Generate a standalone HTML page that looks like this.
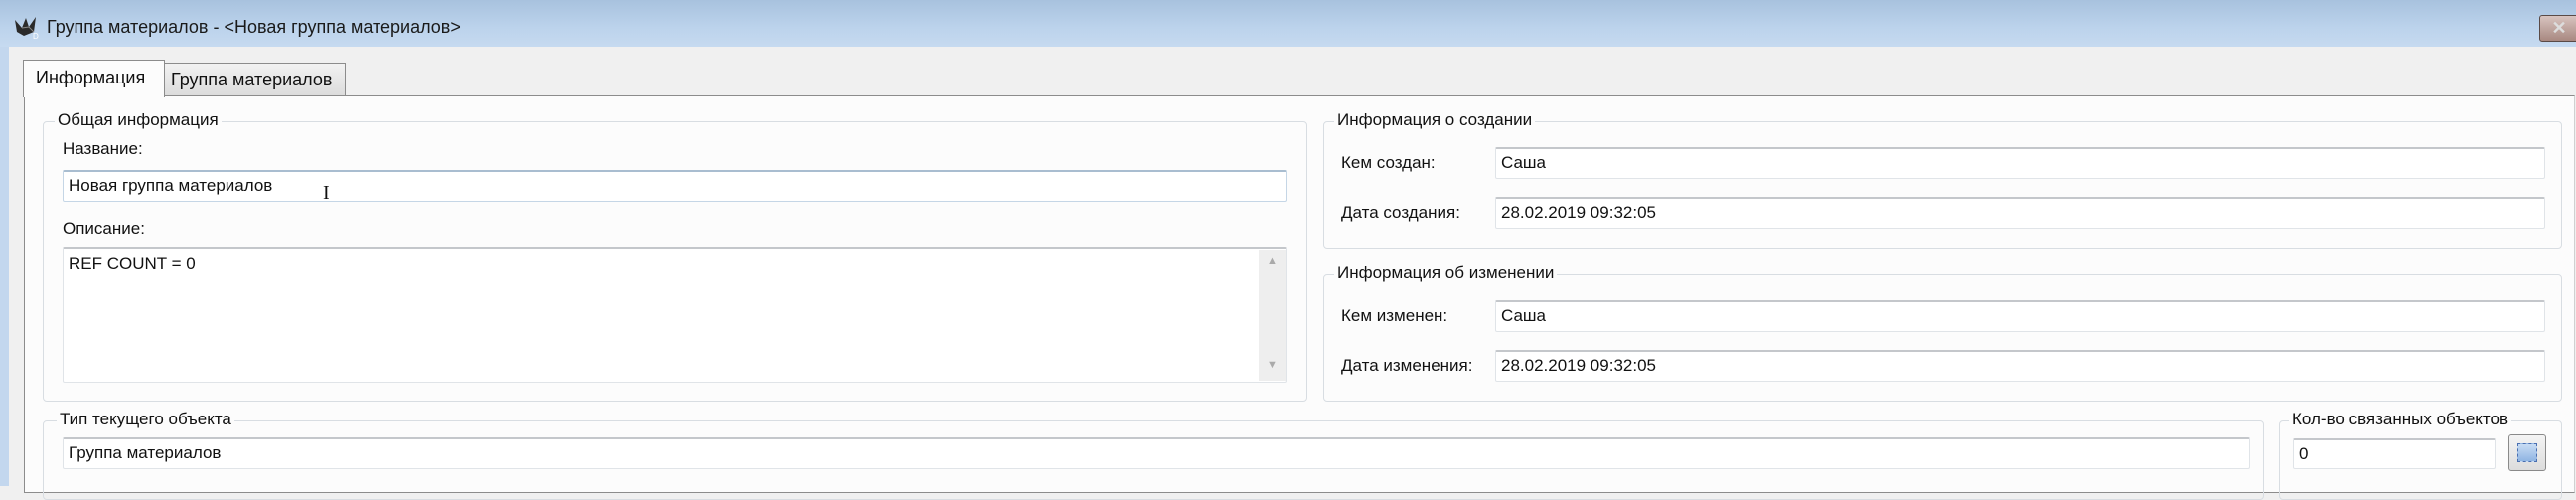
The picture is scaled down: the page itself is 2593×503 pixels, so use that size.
<!DOCTYPE html>
<html><head><meta charset="utf-8"><style>
*{margin:0;padding:0;box-sizing:border-box}
body{width:2593px;height:489px;overflow:hidden;background:#f0f0f0;font-family:"Liberation Sans",sans-serif;font-size:17px;color:#111;position:relative}
.a{position:absolute}
.title{left:0;top:0;width:2593px;height:47px;background:linear-gradient(#a8c2de,#bcd3ec 60%,#c6daf0)}
.frame{left:0;top:47px;width:9px;height:442px;background:#c3d7ee}
.inner{left:9px;top:47px;width:2584px;height:442px;background:#f0f0f0}
.panel{left:24px;top:96px;width:2568px;height:400px;background:#fcfcfc;border:1px solid #8c8c8c;border-right:1px solid #d0d0d0}
.grp{border:1px solid #d8dde2;border-radius:4px}
.gl{background:#fcfcfc;padding:0 3px;line-height:18px}
.inp{background:#fff;border:1px solid #e0e4e8;border-top:2px solid #c4c7cb;border-radius:2px;padding-left:5px;line-height:28px}
.lab{line-height:18px}
</style></head><body>
<div class="a title"></div>
<svg class="a" style="left:14px;top:14px" width="26" height="26" viewBox="0 0 26 26"><path d="M1 6 L8 14 L12 4 L15 13 L22 3 L20 18 L10 22 L3 18 Z" fill="#2a2a2a"/><path d="M8 14 L15 13 L20 18" stroke="#888" fill="none"/><text x="19" y="25" font-size="8" fill="#fff" font-family="Liberation Sans">D</text></svg>
<div class="a" style="left:47px;top:17px;font-size:18px;color:#1a1a1a">Группа материалов - &lt;Новая группа материалов&gt;</div>
<div class="a" style="left:2556px;top:15px;width:40px;height:27px;border:1px solid #5a4a46;border-radius:3px;background:linear-gradient(#d8c4c0,#a88880);color:#ddd;font-weight:bold;font-size:18px;text-align:center;line-height:24px">✕</div>
<div class="a frame"></div>
<div class="a inner"></div>
<div class="a panel"></div>
<div class="a" style="left:165px;top:63px;width:183px;height:33px;border:1px solid #8c8c8c;border-bottom:none;background:linear-gradient(#f2f2f2,#dcdcdc);font-size:18px;padding:6px 0 0 6px">Группа материалов</div>
<div class="a" style="left:23px;top:60px;width:143px;height:38px;border:1px solid #8c8c8c;border-bottom:none;background:#fcfcfc;font-size:18px;padding:7px 0 0 12px">Информация</div>

<div class="a grp" style="left:43px;top:122px;width:1273px;height:282px"></div>
<div class="a gl" style="left:55px;top:112px">Общая информация</div>
<div class="a lab" style="left:63px;top:141px">Название:</div>
<div class="a inp" style="left:63px;top:171px;width:1232px;height:32px;border-color:#c5d6e6;border-top-color:#a9bdd0">Новая группа материалов</div>
<div class="a" style="left:325px;top:184px;font-size:20px;font-family:'Liberation Serif',serif;line-height:20px">I</div>
<div class="a lab" style="left:63px;top:221px">Описание:</div>
<div class="a inp" style="left:63px;top:248px;width:1232px;height:137px;line-height:24px;padding-top:4px">REF COUNT = 0</div>
<div class="a" style="left:1267px;top:251px;width:27px;height:132px;background:#eeeeee;color:#aaa;font-size:11px;text-align:center"><div style="margin-top:6px">▲</div><div style="margin-top:92px">▼</div></div>

<div class="a grp" style="left:1332px;top:122px;width:1247px;height:128px"></div>
<div class="a gl" style="left:1343px;top:112px">Информация о создании</div>
<div class="a lab" style="left:1350px;top:155px">Кем создан:</div>
<div class="a inp" style="left:1505px;top:148px;width:1057px;height:32px">Саша</div>
<div class="a lab" style="left:1350px;top:205px">Дата создания:</div>
<div class="a inp" style="left:1505px;top:198px;width:1057px;height:32px">28.02.2019 09:32:05</div>

<div class="a grp" style="left:1332px;top:276px;width:1247px;height:128px"></div>
<div class="a gl" style="left:1343px;top:266px">Информация об изменении</div>
<div class="a lab" style="left:1350px;top:309px">Кем изменен:</div>
<div class="a inp" style="left:1505px;top:302px;width:1057px;height:32px">Саша</div>
<div class="a lab" style="left:1350px;top:359px">Дата изменения:</div>
<div class="a inp" style="left:1505px;top:352px;width:1057px;height:32px">28.02.2019 09:32:05</div>

<div class="a grp" style="left:43px;top:423px;width:2236px;height:80px"></div>
<div class="a gl" style="left:57px;top:413px">Тип текущего объекта</div>
<div class="a inp" style="left:63px;top:440px;width:2202px;height:32px">Группа материалов</div>

<div class="a grp" style="left:2294px;top:423px;width:285px;height:80px"></div>
<div class="a gl" style="left:2304px;top:413px">Кол-во связанных объектов</div>
<div class="a inp" style="left:2308px;top:441px;width:204px;height:31px">0</div>
<div class="a" style="left:2525px;top:437px;width:38px;height:37px;border:1px solid #8a8a8a;border-radius:3px;background:linear-gradient(#f4f4f4,#dcdcdc)"><div style="position:absolute;left:8px;top:8px;width:20px;height:19px;border:1px dashed #4a6fb0;background:linear-gradient(#c8dcf4,#8fb4e2)"></div></div>
</body></html>
